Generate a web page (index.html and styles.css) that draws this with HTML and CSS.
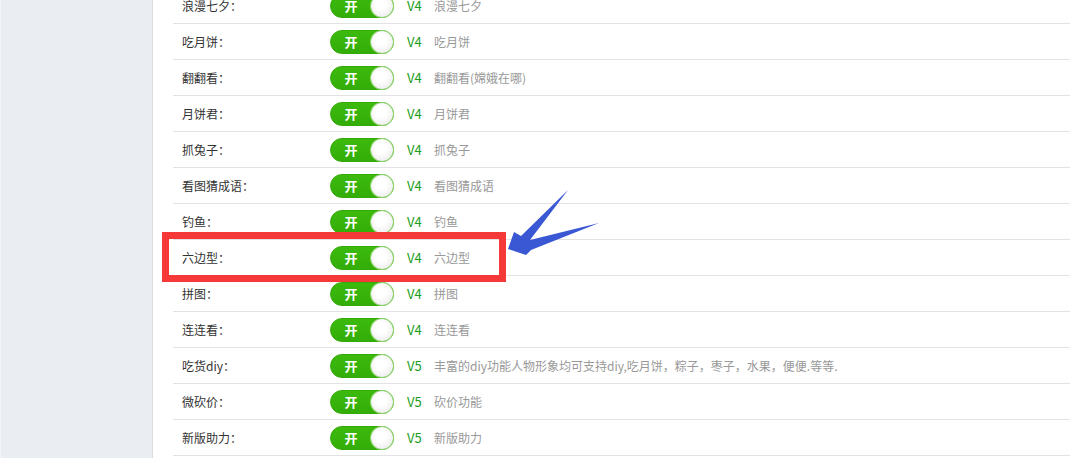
FILE: index.html
```html
<!DOCTYPE html>
<html lang="zh-CN">
<head>
  <meta charset="UTF-8">
  <title>功能开关</title>
  <link rel="stylesheet" href="styles.css">
</head>
<body>
  <div class="page">
    <aside class="sidebar"></aside>

    <main class="content">
      <ul class="switch-list">
        <li class="row"><span class="label">浪漫七夕：</span><span class="switch"><em>开</em><i></i></span><b class="ver">V4</b><span class="desc">浪漫七夕</span></li>
        <li class="row"><span class="label">吃月饼：</span><span class="switch"><em>开</em><i></i></span><b class="ver">V4</b><span class="desc">吃月饼</span></li>
        <li class="row"><span class="label">翻翻看：</span><span class="switch"><em>开</em><i></i></span><b class="ver">V4</b><span class="desc">翻翻看(嫦娥在哪)</span></li>
        <li class="row"><span class="label">月饼君：</span><span class="switch"><em>开</em><i></i></span><b class="ver">V4</b><span class="desc">月饼君</span></li>
        <li class="row"><span class="label">抓兔子：</span><span class="switch"><em>开</em><i></i></span><b class="ver">V4</b><span class="desc">抓兔子</span></li>
        <li class="row"><span class="label">看图猜成语：</span><span class="switch"><em>开</em><i></i></span><b class="ver">V4</b><span class="desc">看图猜成语</span></li>
        <li class="row"><span class="label">钓鱼：</span><span class="switch"><em>开</em><i></i></span><b class="ver">V4</b><span class="desc">钓鱼</span></li>
        <li class="row"><span class="label">六边型：</span><span class="switch"><em>开</em><i></i></span><b class="ver">V4</b><span class="desc">六边型</span></li>
        <li class="row"><span class="label">拼图：</span><span class="switch"><em>开</em><i></i></span><b class="ver">V4</b><span class="desc">拼图</span></li>
        <li class="row"><span class="label">连连看：</span><span class="switch"><em>开</em><i></i></span><b class="ver">V4</b><span class="desc">连连看</span></li>
        <li class="row"><span class="label">吃货diy：</span><span class="switch"><em>开</em><i></i></span><b class="ver">V5</b><span class="desc">丰富的diy功能人物形象均可支持diy,吃月饼，粽子，枣子，水果，便便.等等.</span></li>
        <li class="row"><span class="label">微砍价：</span><span class="switch"><em>开</em><i></i></span><b class="ver">V5</b><span class="desc">砍价功能</span></li>
        <li class="row"><span class="label">新版助力：</span><span class="switch"><em>开</em><i></i></span><b class="ver">V5</b><span class="desc">新版助力</span></li>
      </ul>
    </main>

    <!-- annotation over the list -->
    <div class="mark-box"></div>
    <svg class="mark-arrow" width="110" height="80" viewBox="500 180 110 80">
      <polygon points="508,249 514,232 521,236 568,190 530,240 599,223 531,250 526,255" fill="#3a58d4"/>
    </svg>
  </div>
</body>
</html>
```

FILE: styles.css
```css
body { margin: 0; font-family: "Noto Sans CJK SC", "Microsoft YaHei", sans-serif; font-size: 12px; color: #333; background: #fff; }
.page { position: relative; display: flex; height: 458px; overflow: hidden; }

.sidebar { width: 151px; flex: none; background: #eaedf1; border-left: 1px solid #f4f5f7; border-right: 1px solid #d8dbe0; }

.content { flex: 1; padding: 0 12px 0 20px; }
.switch-list { list-style: none; margin: -12px 0 0; padding: 0; }
.row { display: flex; align-items: center; height: 35px; border-bottom: 1px solid #e2e2e2; padding-left: 9px; }
.label { width: 148px; flex: none; font-family: "Noto Sans CJK TC", "Noto Sans CJK SC", sans-serif; }

.switch { position: relative; display: flex; align-items: center; width: 62px; height: 22px; flex: none; border: 1px solid #33a90a; border-radius: 12px; background: linear-gradient(#3cba0d, #33ad08); }
.switch em { width: 40px; text-align: center; font-style: normal; font-weight: bold; color: #fff; font-size: 13px; }
.switch i { position: absolute; right: 0; top: 0; width: 22px; height: 22px; border-radius: 50%; background: radial-gradient(circle at 45% 40%, #fff 30%, #e6e6e6 100%); box-shadow: 0 0 0 1px #8fd46f; }

.ver { margin-left: 13px; width: 27px; font-weight: normal; color: #1a9d1a; font-size: 13px; }
.desc { color: #999; }

.mark-box { position: absolute; left: 162px; top: 232px; width: 330px; height: 36px; border: 7px solid #f53838; }
.mark-arrow { position: absolute; left: 500px; top: 180px; }
```
